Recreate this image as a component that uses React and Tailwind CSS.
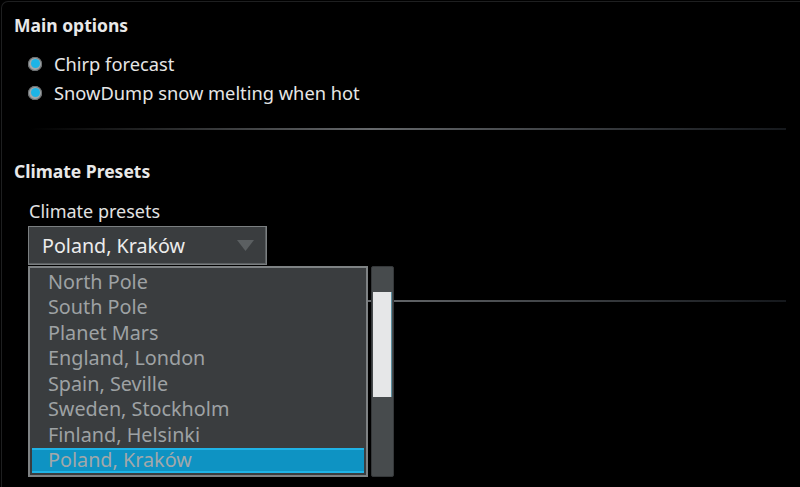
import React from "react";

const items = [
  "North Pole",
  "South Pole",
  "Planet Mars",
  "England, London",
  "Spain, Seville",
  "Sweden, Stockholm",
  "Finland, Helsinki",
  "Poland, Kraków",
];

function Radio({ label }) {
  return (
    <div className="flex h-[29px] items-center">
      <span className="ml-[14px] flex h-[14px] w-[14px] items-center justify-center rounded-full bg-[#a3a7a9] shadow-[inset_0_0_0_1px_#6a6e70]">
        <span className="h-[9px] w-[9px] rounded-full bg-[#1db4e6]" />
      </span>
      <span className="ml-[12px] text-[18.3px] leading-[24px] text-[#e6e6e6]">{label}</span>
    </div>
  );
}

function Separator({ className }) {
  return (
    <div
      className={
        "h-[2px] bg-linear-to-r from-transparent via-[#66696c] via-45% to-[#15181c] " +
        className
      }
    />
  );
}

export default function App() {
  return (
    <div className="relative h-[487px] w-[800px] overflow-hidden bg-black font-['Noto_Sans',sans-serif]">
      <div className="h-full pl-[1px] pt-[1px]">
        <div className="h-full rounded-tl-[7px] border-l border-t border-[#1e1f20] pl-[12px] pt-[11px]">
          <div className="text-[17.5px] font-bold leading-[24px] text-[#e8e8e8]">Main options</div>
          <div className="mt-[12px]">
            <Radio label="Chirp forecast" />
            <Radio label="SnowDump snow melting when hot" />
          </div>
          <Separator className="ml-[16px] mr-[14px] mt-[21px]" />
          <div className="mt-[29px] text-[17.5px] font-bold leading-[24px] text-[#e8e8e8]">
            Climate Presets
          </div>
          <div className="ml-[15px] mt-[16px] text-[18px] leading-[24px] text-[#e2e2e2]">
            Climate presets
          </div>
          <div className="ml-[14px] mt-[3px] flex h-[39px] w-[239px] items-center justify-between border border-[#7b7f81] bg-[#3a3d3f] pl-[13px] pr-[12px] shadow-[inset_-1px_-1px_0_#5d6163]">
            <span className="text-[19.7px] leading-[26px] text-[#ececec]">Poland, Kraków</span>
            <svg width="17" height="11" viewBox="0 0 17 11">
              <polygon points="0,0 17,0 8.5,11" fill="#5b5f61" />
            </svg>
          </div>
          <Separator className="ml-[16px] mr-[14px] mt-[35px]" />
        </div>
      </div>

      {/* open dropdown list */}
      <div className="absolute left-[28px] top-[266px] h-[211px] w-[340px] border-2 border-[#7e8284] bg-[#3a3d3f] px-[2px] pt-[1px]">
        {items.map((it, i) => {
          const sel = i === items.length - 1;
          return (
            <div
              key={it}
              className={
                sel
                  ? "flex h-[25.5px] items-center border-y-2 border-[#1fb3e6] bg-[#0e93c3] pl-[16px] text-[19.8px] text-[#a2a8aa]"
                  : "flex h-[25.5px] items-center pl-[16px] text-[19.8px] text-[#9ea2a4]"
              }
            >
              {it}
            </div>
          );
        })}
      </div>

      {/* scrollbar */}
      <div className="absolute left-[371px] top-[266px] h-[211px] w-[23px] rounded-[2px] border border-[#35383a] bg-[#474b4d] px-[1px] pt-[25px]">
        <div className="h-[105px] w-[19px] border-r border-[#5a8ea0] bg-[#e6e7e8]" />
      </div>
    </div>
  );
}
